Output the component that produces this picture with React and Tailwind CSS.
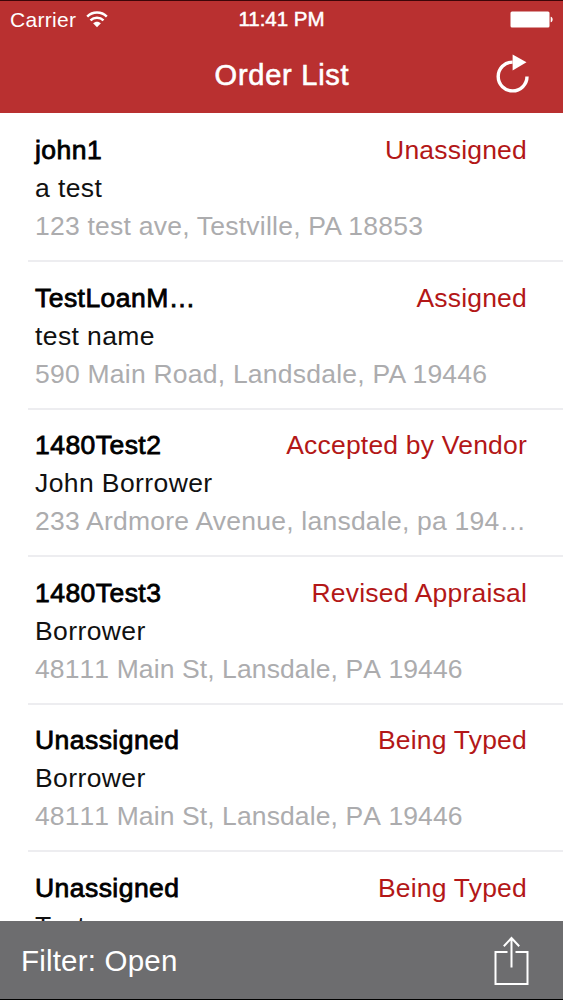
const orders = [
  {
    id: 1,
    loan: "john1",
    status: "Unassigned",
    borrower: "a test",
    address: "123 test ave, Testville, PA 18853",
  },
  {
    id: 2,
    loan: "TestLoanM…",
    status: "Assigned",
    borrower: "test name",
    address: "590 Main Road, Landsdale, PA 19446",
  },
  {
    id: 3,
    loan: "1480Test2",
    status: "Accepted by Vendor",
    borrower: "John Borrower",
    address: "233 Ardmore Avenue, lansdale, pa 194…",
  },
  {
    id: 4,
    loan: "1480Test3",
    status: "Revised Appraisal",
    borrower: "Borrower",
    address: "48111 Main St, Lansdale, PA 19446",
    looseDigits: true,
  },
  {
    id: 5,
    loan: "Unassigned",
    status: "Being Typed",
    borrower: "Borrower",
    address: "48111 Main St, Lansdale, PA 19446",
    looseDigits: true,
  },
  {
    id: 6,
    loan: "Unassigned",
    status: "Being Typed",
    borrower: "Test",
    address: "",
  },
];

function App() {
  return (
    <div className="flex flex-col w-full h-screen overflow-hidden bg-white font-['Liberation_Sans',sans-serif]">
      <header className="shrink-0 h-[113px] bg-[#b93030] border-t border-t-[#3c0508] text-white">
        <StatusBar />

        <div className="grid grid-cols-[1fr_auto_1fr] items-center h-[73px] pr-[33px]">
          <h1 className="col-start-2 pl-[34px] text-[29px] leading-9 tracking-[0.75px] [-webkit-text-stroke:0.6px]">
            Order List
          </h1>
          <button
            type="button"
            aria-label="Refresh"
            className="justify-self-end pb-0.5"
          >
            <RefreshIcon />
          </button>
        </div>
      </header>

      <main className="flex-1 min-h-0 overflow-hidden">
        {orders.map((order) => (
          <OrderRow key={order.id} order={order} />
        ))}
      </main>

      <footer className="shrink-0 flex items-center justify-between h-[79px] pl-[21px] pr-[34px] bg-[#6d6d6f] border-b border-b-black text-white">
        <span className="pt-0.5 text-[29.5px] tracking-[0.2px]">
          Filter: Open
        </span>
        <button type="button" aria-label="Share" className="pt-px">
          <ShareIcon />
        </button>
      </footer>
    </div>
  );
}

function StatusBar() {
  return (
    <div className="grid grid-cols-[1fr_auto_1fr] items-center h-[37px] pl-[10px] pr-[10px] text-[21px]">
      <div className="flex items-center gap-[10px]">
        <span className="tracking-[0.3px]">Carrier</span>
        <WifiIcon />
      </div>
      <span className="text-[20.5px] [-webkit-text-stroke:0.5px]">
        11:41 PM
      </span>
      <div className="justify-self-end">
        <BatteryIcon />
      </div>
    </div>
  );
}

function OrderRow({ order }) {
  return (
    <article className="h-[147.6px] pl-7">
      <div className="h-full pl-[7px] pr-9 pt-[18px] text-[26.5px] whitespace-nowrap">
        <div className="flex justify-between leading-[38px]">
          <span className="tracking-[0.45px] text-black [-webkit-text-stroke:0.8px]">
            {order.loan}
          </span>
          <span className="tracking-[0.2px] text-[#b31717]">
            {order.status}
          </span>
        </div>
        <div className="leading-[39px] tracking-[0.4px] text-[#111]">
          {order.borrower}
        </div>
        <div
          className={`leading-[36px] text-[#acacae] ${
            order.looseDigits
              ? "tracking-[0.1px] [font-kerning:none]"
              : "tracking-[0.23px]"
          }`}
        >
          {order.address}
        </div>
        <div className="mt-[16px] -ml-[7px] -mr-9 h-[2px] bg-[#ededf0]" />
      </div>
    </article>
  );
}

function WifiIcon() {
  return (
    <svg width="22" height="17" viewBox="0 0 22 17" fill="none">
      <path
        d="M1.2 5.6C6.6.2 15.4.2 20.8 5.6"
        stroke="currentColor"
        strokeWidth="2.5"
      />
      <path
        d="M4.5 9.4C8.1 5.9 13.9 5.9 17.5 9.4"
        stroke="currentColor"
        strokeWidth="2.5"
      />
      <path
        d="M7.1 12.3C9.2 10.2 12.8 10.2 14.9 12.3L11 16.3Z"
        fill="currentColor"
      />
    </svg>
  );
}

function BatteryIcon() {
  return (
    <svg width="43" height="17" viewBox="0 0 43 17" fill="currentColor">
      <rect x="0.5" y="0.5" width="39" height="16" rx="1.5" />
      <path d="M40.7 5.7C43.3 6.2 43.3 10.8 40.7 11.3Z" />
    </svg>
  );
}

function RefreshIcon() {
  return (
    <svg width="34" height="40" viewBox="0 0 34 40" fill="none">
      <path
        d="M31 22.5A14.4 14.4 0 1 1 16.6 8.1"
        stroke="currentColor"
        strokeWidth="3.4"
      />
      <path d="M16.6 0.5L30.5 8.3L16.6 16.5Z" fill="currentColor" />
    </svg>
  );
}

function ShareIcon() {
  return (
    <svg
      width="35"
      height="50"
      viewBox="0 0 35 50"
      fill="none"
      stroke="currentColor"
      strokeWidth="2"
    >
      <path d="M13.5 16H1.5V48H33.5V16H21.5" />
      <path d="M17.5 31.5V2M9.8 10.2L17.5 2L25.2 10.2" />
    </svg>
  );
}

export default App;
